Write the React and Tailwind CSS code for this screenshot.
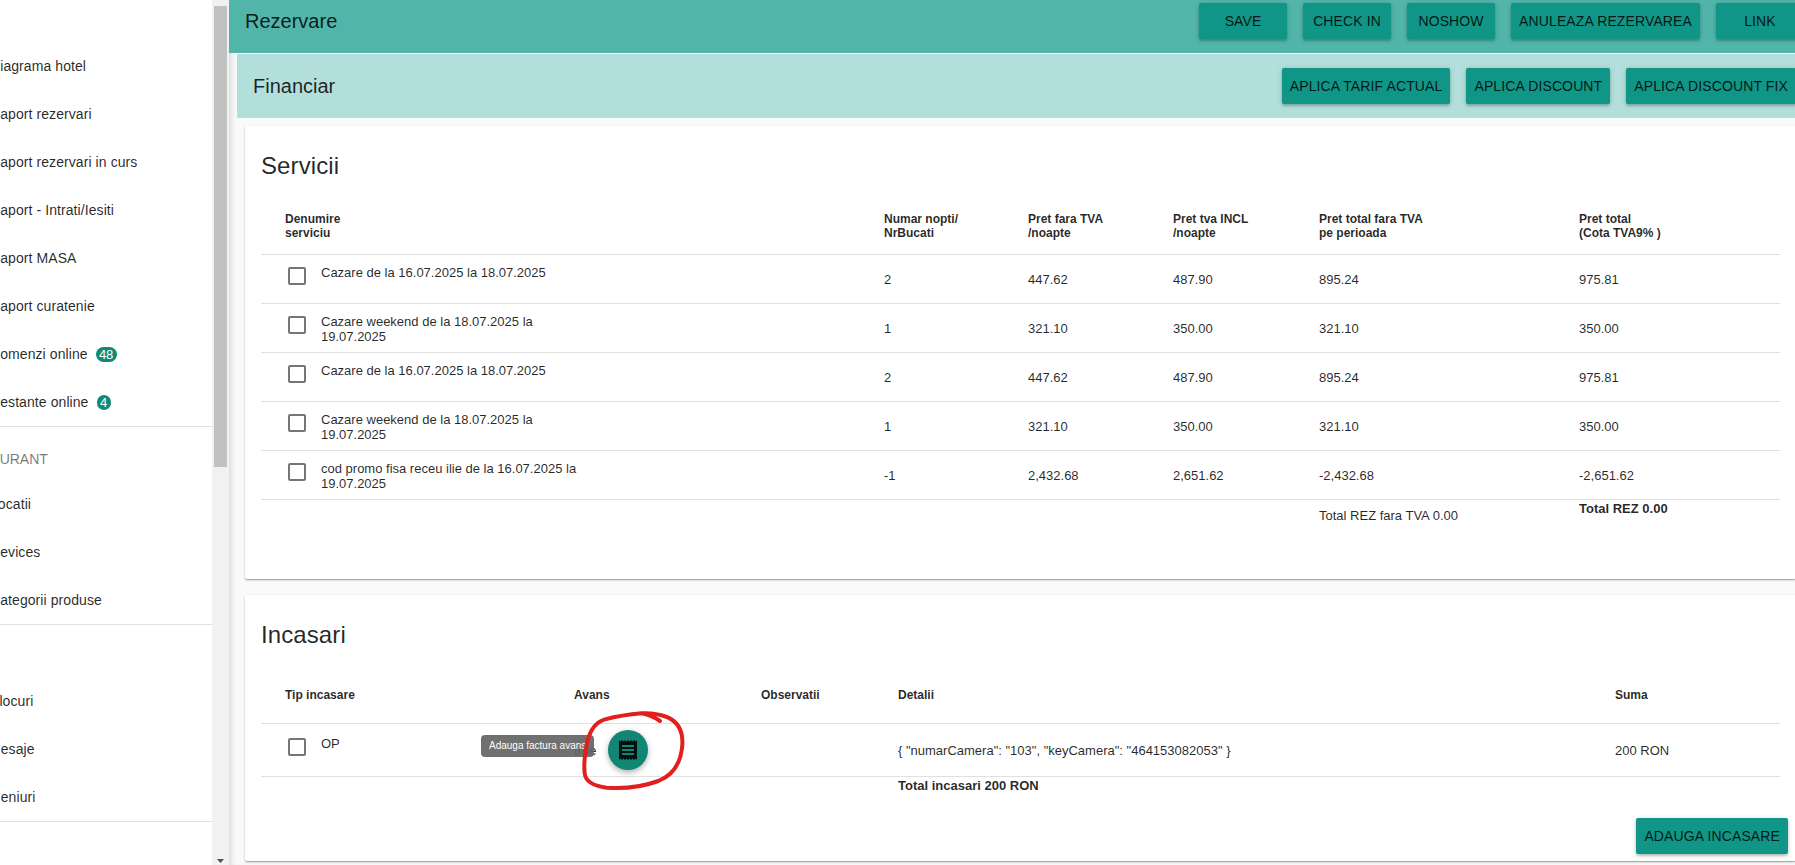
import React from "react";

const menuTop = ["Diagrama hotel", "Raport rezervari", "Raport rezervari in curs", "Raport - Intrati/Iesiti", "Raport MASA", "Raport curatenie"];

const services = [
  { name: "Cazare de la 16.07.2025 la 18.07.2025", qty: "2", net: "447.62", gross: "487.90", totalNet: "895.24", total: "975.81" },
  { name: "Cazare weekend de la 18.07.2025 la 19.07.2025", qty: "1", net: "321.10", gross: "350.00", totalNet: "321.10", total: "350.00" },
  { name: "Cazare de la 16.07.2025 la 18.07.2025", qty: "2", net: "447.62", gross: "487.90", totalNet: "895.24", total: "975.81" },
  { name: "Cazare weekend de la 18.07.2025 la 19.07.2025", qty: "1", net: "321.10", gross: "350.00", totalNet: "321.10", total: "350.00" },
  { name: "cod promo fisa receu ilie de la 16.07.2025 la 19.07.2025", qty: "-1", net: "2,432.68", gross: "2,651.62", totalNet: "-2,432.68", total: "-2,651.62" },
];

const MenuItem = ({ children, className = "" }) => (
  <div className={`h-12 flex items-center whitespace-nowrap text-sm tracking-[0.08px] text-black/85 ${className}`}>{children}</div>
);

const Badge = ({ children, className }) => (
  <span className={`ml-2 h-[15px] rounded-full bg-[#0f8a78] text-white text-[13px] tracking-normal leading-[15px] text-center ${className}`}>{children}</span>
);

const Button = ({ children, className = "" }) => (
  <button className={`h-9 min-w-[88px] shrink-0 px-2 rounded-[2px] bg-[#0f9687] text-sm tracking-[0.12px] whitespace-nowrap text-black/85 shadow-[0_1px_5px_rgba(0,0,0,0.2),0_2px_2px_rgba(0,0,0,0.14)] ${className}`}>
    {children}
  </button>
);

const Checkbox = () => (
  <span className="block w-[18px] h-[18px] shrink-0 rounded-[2px] border-2 border-[#757575]" />
);

const Sidebar = () => (
  <aside className="w-[212px] shrink-0 h-full bg-white overflow-hidden pt-[42px]">
    <div className="-ml-[10px]">
      {menuTop.map((item) => (
        <MenuItem key={item}>{item}</MenuItem>
      ))}
      <MenuItem>
        Comenzi online <Badge className="w-[21px]">48</Badge>
      </MenuItem>
      <MenuItem>
        Restante online <Badge className="w-[14px]">4</Badge>
      </MenuItem>
    </div>
    <div className="h-px bg-[#e0e0e0]" />
    <div className="h-[53px] pt-6 -ml-[46px] text-sm leading-4 text-black/55 font-medium whitespace-nowrap">RESTAURANT</div>
    <div className="-ml-[10px]">
      <MenuItem>Locatii</MenuItem>
      <MenuItem>Devices</MenuItem>
      <MenuItem>Categorii produse</MenuItem>
    </div>
    <div className="h-px bg-[#e0e0e0]" />
    <div className="h-[52px]" />
    <div className="-ml-[10px]">
      <MenuItem>Blocuri</MenuItem>
      <MenuItem className="-ml-px">Mesaje</MenuItem>
      <MenuItem className="-ml-px">Meniuri</MenuItem>
    </div>
    <div className="h-px bg-[#e0e0e0]" />
  </aside>
);

const Scrollbar = () => (
  <div className="w-[17px] shrink-0 h-full bg-[#f1f1f1] flex flex-col items-start pt-[6px]">
    <div className="ml-[2px] w-[13px] h-[461px] bg-[#c1c1c1]" />
    <svg className="mt-auto mb-[2px] ml-[5px]" width="7" height="4" viewBox="0 0 7 4">
      <path d="M0 0h7L3.5 4z" fill="#505050" />
    </svg>
  </div>
);

const serviceCols = "grid grid-cols-[623px_144px_145px_146px_260px_201px]";
const incomeCols = "grid grid-cols-[313px_187px_137px_717px_165px]";

const ServicesCard = () => (
  <section className="h-[453px] bg-white rounded-[2px] pl-4 shadow-[0_1px_3px_rgba(0,0,0,0.2),0_1px_1px_rgba(0,0,0,0.14),0_2px_1px_-1px_rgba(0,0,0,0.12)]">
    <h2 className="h-20 flex items-center text-2xl tracking-[0.1px] text-black/85">Servicii</h2>
    <div className="w-[1519px] text-[13px] leading-[15px] text-black/85">
      <div className={`${serviceCols} h-[49px] pb-[8px] items-center border-b border-[#e0e0e0] text-xs leading-[14px] font-bold`}>
        <div className="pl-6">Denumire<br />serviciu</div>
        <div>Numar nopti/<br />NrBucati</div>
        <div>Pret fara TVA<br />/noapte</div>
        <div>Pret tva INCL<br />/noapte</div>
        <div>Pret total fara TVA<br />pe perioada</div>
        <div>Pret total<br />(Cota TVA9% )</div>
      </div>
      {services.map((row, i) => (
        <div key={i} className={`${serviceCols} h-[49px] items-center border-b border-[#e0e0e0]`}>
          <div className="h-full flex items-start pl-[27px] pt-3">
            <Checkbox />
            <div className="ml-[15px] -mt-[2px] w-[260px]">{row.name}</div>
          </div>
          <div>{row.qty}</div>
          <div>{row.net}</div>
          <div>{row.gross}</div>
          <div>{row.totalNet}</div>
          <div>{row.total}</div>
        </div>
      ))}
      <div className={serviceCols}>
        <div className="col-span-4" />
        <div className="pt-[8px]">Total REZ fara TVA 0.00</div>
        <div className="pt-px font-bold">Total REZ 0.00</div>
      </div>
    </div>
  </section>
);

const IncomeCard = () => (
  <section className="h-[266px] mt-4 bg-white rounded-[2px] pl-4 pr-2 shadow-[0_1px_3px_rgba(0,0,0,0.2),0_1px_1px_rgba(0,0,0,0.14),0_2px_1px_-1px_rgba(0,0,0,0.12)]">
    <h2 className="h-20 flex items-center text-2xl tracking-[0.1px] text-black/85">Incasari</h2>
    <div className="w-[1519px] text-[13px] leading-[15px] text-black/85">
      <div className={`${incomeCols} h-[49px] pb-[9px] items-center border-b border-[#e0e0e0] text-xs leading-[14px] font-bold`}>
        <div className="pl-6">Tip incasare</div>
        <div>Avans</div>
        <div>Observatii</div>
        <div>Detalii</div>
        <div>Suma</div>
      </div>
      <div className={`${incomeCols} h-[53px] items-center border-b border-[#e0e0e0]`}>
        <div className="h-full flex items-start pl-[27px] pt-[14px]">
          <Checkbox />
          <div className="ml-[15px] -mt-[2px]">OP</div>
        </div>
        <div className="relative flex items-center">
          <span className="w-[34px] shrink-0">true</span>
          <button className="w-10 h-10 rounded-full bg-[#118675] flex items-center justify-center shadow-[0_3px_5px_rgba(0,0,0,0.2),0_1px_10px_rgba(0,0,0,0.12)]">
            <svg width="24" height="24" viewBox="0 0 24 24" fill="#000000" fillOpacity="0.87">
              <path d="M18 17H6v-2h12v2zm0-4H6v-2h12v2zm0-4H6V7h12v2zM3 22l1.5-1.5L6 22l1.5-1.5L9 22l1.5-1.5L12 22l1.5-1.5L15 22l1.5-1.5L18 22l1.5-1.5L21 22V2l-1.5 1.5L18 2l-1.5 1.5L15 2l-1.5 1.5L12 2l-1.5 1.5L9 2 7.5 3.5 6 2 4.5 3.5 3 2v20z" />
            </svg>
          </button>
          <div className="absolute -left-[93px] top-[5px] w-[113px] h-[22px] rounded bg-[#616161]/90 pl-2 overflow-hidden text-[10px] leading-[22px] text-white whitespace-nowrap">
            Adauga factura avans
          </div>
        </div>
        <div />
        <div>{'{ "numarCamera": "103", "keyCamera": "464153082053" }'}</div>
        <div>200 RON</div>
      </div>
      <div className={`${incomeCols} pt-px`}>
        <div className="col-span-3" />
        <div className="col-span-2 font-bold">Total incasari 200 RON</div>
      </div>
    </div>
    <div className="flex justify-end mt-[25px]">
      <Button>ADAUGA INCASARE</Button>
    </div>
  </section>
);

const App = () => {
  return (
    <div className="relative w-screen h-screen overflow-hidden flex bg-white font-['Liberation_Sans',Arial,sans-serif]">
      <Sidebar />
      <Scrollbar />
      <main className="w-[1575px] shrink-0 h-full bg-[#fafafa] shadow-[inset_6px_0_6px_-4px_rgba(0,0,0,0.15)]">
        <header className="h-[53px] bg-[#52b5aa] flex items-center pl-4 gap-4">
          <h1 className="mr-auto text-xl leading-6 -mt-[11px] text-black/85">Rezervare</h1>
          <div className="flex gap-4 -mt-[11px]">
            <Button>SAVE</Button>
            <Button>CHECK IN</Button>
            <Button>NOSHOW</Button>
            <Button>ANULEAZA REZERVAREA</Button>
            <Button>LINK</Button>
          </div>
        </header>
        <div className="ml-2 mt-px h-16 bg-[#b2dfdb] flex items-center pl-4 pr-2">
          <h2 className="mr-auto text-xl text-black/85">Financiar</h2>
          <div className="flex gap-4">
            <Button>APLICA TARIF ACTUAL</Button>
            <Button>APLICA DISCOUNT</Button>
            <Button>APLICA DISCOUNT FIX</Button>
          </div>
        </div>
        <div className="pl-4 pr-2 pt-2">
          <ServicesCard />
          <IncomeCard />
        </div>
      </main>
      <svg className="absolute left-[575px] top-[705px] pointer-events-none" width="115" height="95" viewBox="0 0 345 285" fill="none">
        <path
          d="M255 48C240 38 222 28 200 25C165 28 125 34 90 43C65 50 48 70 38 105C30 140 26 175 29 205C32 230 55 243 95 248C145 252 200 246 250 228C290 212 315 180 321 130C326 90 315 55 280 38C255 27 225 24 200 25"
          stroke="#e21e1e"
          strokeWidth="12"
          strokeLinecap="round"
        />
      </svg>
    </div>
  );
};

export default App;
